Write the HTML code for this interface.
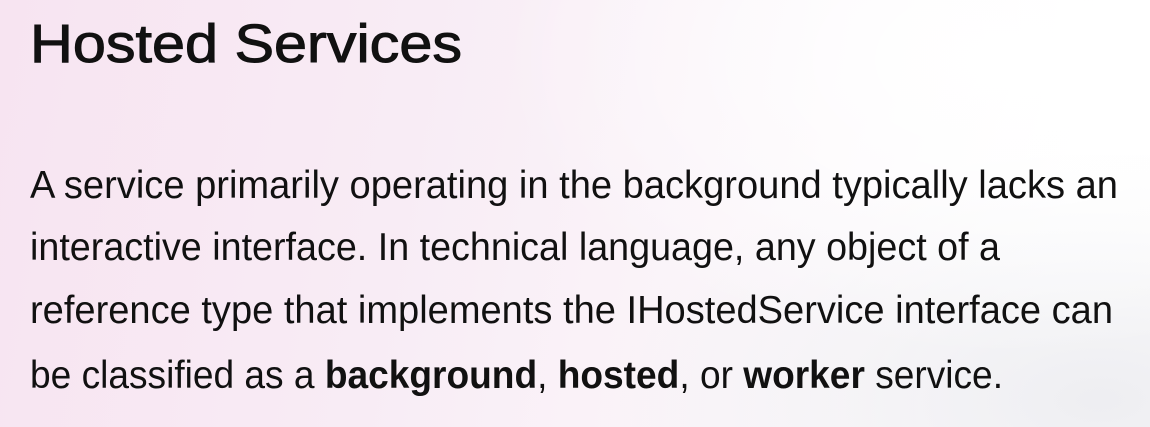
<!DOCTYPE html>
<html><head><meta charset="utf-8"><style>
html,body{margin:0;padding:0;}
body{width:1150px;height:427px;overflow:hidden;
background:
radial-gradient(ellipse 500px 300px at 1000px 60px, rgba(255,255,255,1) 0%, rgba(255,255,255,0) 100%),
radial-gradient(ellipse 500px 250px at 1100px 400px, rgba(236,236,240,0.9) 0%, rgba(240,240,244,0) 100%),
linear-gradient(100deg,#f7e4f1 0%,#f8ecf5 35%,#fbf6fa 65%,#ffffff 90%);}
svg{position:absolute;left:0;top:0}
text{font-family:"Liberation Sans",sans-serif;fill:#111;}
</style></head><body>
<svg width="1150" height="427">
<text x="30" y="62" font-size="54" stroke="#111" stroke-width="1" textLength="432" lengthAdjust="spacingAndGlyphs">Hosted Services</text>
<text x="30" y="198" font-size="39" textLength="1088" lengthAdjust="spacingAndGlyphs">A service primarily operating in the background typically lacks an</text>
<text x="30" y="260" font-size="39" textLength="970" lengthAdjust="spacingAndGlyphs">interactive interface. In technical language, any object of a</text>
<text x="30" y="323" font-size="39" textLength="1083" lengthAdjust="spacingAndGlyphs">reference type that implements the IHostedService interface can</text>
<text x="30" y="388" font-size="39" textLength="973" lengthAdjust="spacingAndGlyphs">be classified as a <tspan font-weight="bold">background</tspan>, <tspan font-weight="bold">hosted</tspan>, or <tspan font-weight="bold">worker</tspan> service.</text>
</svg>
</body></html>
